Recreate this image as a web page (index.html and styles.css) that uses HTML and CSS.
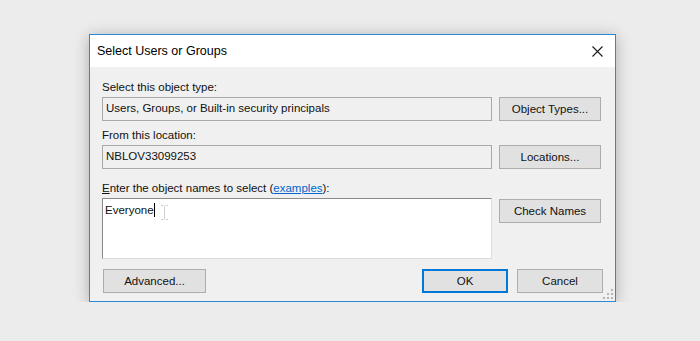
FILE: index.html
```html
<!DOCTYPE html>
<html lang="en">
<head>
  <meta charset="UTF-8" />
  <title>Select Users or Groups</title>
  <link rel="stylesheet" href="styles.css">
</head>
<body>

  <div class="dialog">

    <div class="title-bar">
      <div class="title">Select Users or Groups</div>
      <svg class="close" width="11" height="11" viewBox="0 0 11 11">
        <path d="M0.5 0.5 L10.5 10.5 M10.5 0.5 L0.5 10.5" stroke="#1a1a1a" stroke-width="1.1" fill="none"/>
      </svg>
    </div>

    <div class="form">
      <div class="label first">Select this object type:</div>
      <div class="field">Users, Groups, or Built-in security principals</div>
      <div class="button">Object Types...</div>

      <div class="label">From this location:</div>
      <div class="field">NBLOV33099253</div>
      <div class="button">Locations...</div>

      <div class="label last"><u>E</u>nter the object names to select (<a class="link">examples</a>):</div>
      <div class="names">
        <span>Everyone</span><span class="caret"></span>
        <svg class="ibeam" width="7" height="15" viewBox="0 0 7 15">
          <path d="M0 0.5 H2.5 M4.5 0.5 H7 M3.5 1 V14 M0 14.5 H2.5 M4.5 14.5 H7" stroke="#cfcfcf" stroke-width="1" fill="none"/>
        </svg>
      </div>
      <div class="button">Check Names</div>
    </div>

    <div class="footer">
      <div class="button wide">Advanced...</div>
      <div class="footer-right">
        <div class="button ok">OK</div>
        <div class="button cancel">Cancel</div>
      </div>
    </div>

    <svg class="grip" width="10" height="10" viewBox="0 0 10 10">
      <rect x="8" y="0" width="2" height="2" fill="#b4b4b4"/>
      <rect x="4" y="4" width="2" height="2" fill="#b4b4b4"/>
      <rect x="8" y="4" width="2" height="2" fill="#b4b4b4"/>
      <rect x="0" y="8" width="2" height="2" fill="#b4b4b4"/>
      <rect x="4" y="8" width="2" height="2" fill="#b4b4b4"/>
      <rect x="8" y="8" width="2" height="2" fill="#b4b4b4"/>
    </svg>

  </div>

</body>
</html>
```

FILE: styles.css
```css
* {
  box-sizing: border-box;
}

body {
  margin: 0;
  padding: 34px 0 0 89px;
  background-color: #ececec;
  font-family: "Liberation Sans", Arial, sans-serif;
  font-size: 11.5px;
  color: #111;
}

.dialog {
  position: relative;
  width: 527px;
  height: 268px;
  border: 1px solid #2b8ad8;
  background-color: #f0f0f0;
  box-shadow: 0 2px 14px rgba(0, 0, 0, 0.28);
}

.title-bar {
  height: 32px;
  background-color: #fff;
  display: flex;
  align-items: center;
  justify-content: space-between;
  padding: 0 12px 0 7px;
}

.title {
  font-size: 12.5px;
  color: #000;
}

.form {
  display: grid;
  grid-template-columns: 390px 102px;
  column-gap: 7px;
  padding: 0 13px 0 12px;
}

.label {
  grid-column: 1 / 3;
  height: 14px;
  line-height: 14px;
  margin: 7px 0 3px 0;
}

.label.first {
  margin-top: 13px;
}

.label.last {
  margin-top: 12px;
  margin-bottom: 3px;
}

.link {
  color: #0066cc;
  text-decoration: underline;
}

.field {
  height: 24px;
  line-height: 20px;
  padding: 0 3px;
  border: 1px solid #a9a9a9;
  background-color: #f0f0f0;
  white-space: nowrap;
}

.names {
  position: relative;
  height: 61px;
  padding: 3px 2px;
  line-height: 16px;
  background-color: #fff;
  border: 1px solid #dcdcdc;
  border-top-color: #8a8a8a;
  border-left-color: #8a8a8a;
  display: flex;
  align-items: flex-start;
}

.caret {
  display: inline-block;
  width: 1px;
  height: 14px;
  margin-top: 1px;
  background-color: #000;
}

.ibeam {
  position: absolute;
  left: 58px;
  top: 6px;
}

.button {
  height: 24px;
  line-height: 22px;
  text-align: center;
  background-color: #e1e1e1;
  border: 1px solid #adadad;
  white-space: nowrap;
}

.form > .button:last-child {
  margin-top: 1px;
}

.footer {
  display: flex;
  justify-content: space-between;
  padding: 10px 12px 0 13px;
}

.footer .wide {
  width: 103px;
}

.footer-right {
  display: flex;
  gap: 9px;
}

.ok {
  width: 86px;
  border: 2px solid #0078d7;
  line-height: 20px;
}

.cancel {
  width: 86px;
}

.grip {
  position: absolute;
  right: 2px;
  bottom: 2px;
}
```
